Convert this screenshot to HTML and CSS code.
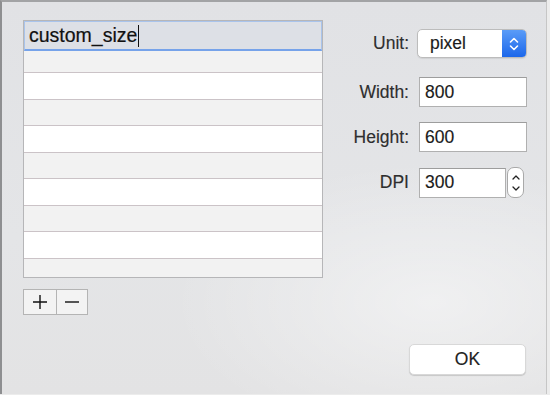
FILE: index.html
```html
<!DOCTYPE html>
<html lang="en">
<head>
    <meta charset="UTF-8">
    <title>Custom size</title>
    <link rel="stylesheet" href="styles.css">
</head>
<body>
    <div class="window">
        <div class="left-col">
            <div class="size-list">
                <div class="row edit-row">
                    <span class="edit-text">custom_size</span><span class="caret"></span>
                </div>
                <div class="row odd first"></div>
                <div class="row even"></div>
                <div class="row odd"></div>
                <div class="row even"></div>
                <div class="row odd"></div>
                <div class="row even"></div>
                <div class="row odd"></div>
                <div class="row even"></div>
                <div class="row odd last"></div>
            </div>
            <div class="list-buttons">
                <button class="list-btn" title="Add">
                    <svg width="16" height="16" viewBox="0 0 16 16"><path d="M8 1v14M1 8h14" stroke="#111" stroke-width="1.4" fill="none"/></svg>
                </button>
                <button class="list-btn minus" title="Remove">
                    <svg width="16" height="16" viewBox="0 0 16 16"><path d="M1 8h14" stroke="#111" stroke-width="1.4" fill="none"/></svg>
                </button>
            </div>
        </div>

        <div class="right-col">
            <div class="field-row unit-row">
                <label class="field-label">Unit:</label>
                <div class="popup">
                    <span class="popup-value">pixel</span>
                    <span class="popup-arrows">
                        <svg width="10" height="16" viewBox="0 0 10 16"><path d="M1.5 6L5 2.5L8.5 6M1.5 10L5 13.5L8.5 10" stroke="#fff" stroke-width="1.6" fill="none" stroke-linecap="round" stroke-linejoin="round"/></svg>
                    </span>
                </div>
            </div>
            <div class="field-row">
                <label class="field-label" for="width">Width:</label>
                <input class="text-input" id="width" type="text" value="800">
            </div>
            <div class="field-row">
                <label class="field-label" for="height">Height:</label>
                <input class="text-input" id="height" type="text" value="600">
            </div>
            <div class="field-row">
                <label class="field-label" for="dpi">DPI</label>
                <input class="text-input dpi-input" id="dpi" type="text" value="300">
                <span class="stepper">
                    <svg width="10" height="26" viewBox="0 0 10 26"><path d="M2 9L5 6L8 9M2 17L5 20L8 17" stroke="#222" stroke-width="1.3" fill="none" stroke-linecap="round" stroke-linejoin="round"/></svg>
                </span>
            </div>

            <button class="ok-btn">OK</button>
        </div>
    </div>
</body>
</html>
```

FILE: styles.css
```css
body {
    margin: 0;
    width: 550px;
    height: 395px;
    overflow: hidden;
    background-color: #ececec;
    font-family: 'Liberation Sans', Arial, sans-serif;
    color: #222;
}

.window {
    box-sizing: border-box;
    width: 547px;
    height: 394px;
    display: flex;
    padding: 18px 0 19px 21px;
    border-top: 2px solid #a2a3a5;
    border-left: 2px solid #8e8f91;
    border-right: 1px solid #c6c6c6;
    background:
        radial-gradient(ellipse 260px 140px at 430px 300px, rgba(255, 255, 255, 0.45), rgba(255, 255, 255, 0)),
        linear-gradient(to bottom, #e1e2e5, #e4e5e7 60%, #e3e3e4);
}

/* список размеров */
.left-col {
    width: 300px;
    display: flex;
    flex-direction: column;
}

.size-list {
    box-sizing: border-box;
    height: 258px;
    border: 1px solid #b6b6b8;
    overflow: hidden;
    background-color: #f2f2f2;
}

.row {
    box-sizing: border-box;
    height: 26.5px;
    border-bottom: 1px solid #cbc3c7;
}

.row.odd {
    background-color: #f2f2f2;
}

.row.even {
    background-color: #ffffff;
}

.row.first {
    height: 22px;
}

.row.last {
    border-bottom: none;
}

.edit-row {
    height: 30px;
    display: flex;
    align-items: center;
    padding-left: 4px;
    background-color: #dde0e6;
    border: 1px solid #a9c4ec;
    border-bottom: 2.5px solid #76a3ea;
}

.edit-text {
    font-size: 19.5px;
    color: #111;
    line-height: 1;
    -webkit-text-stroke: 0.2px #111;
}

.caret {
    display: inline-block;
    width: 1px;
    height: 22px;
    background-color: #111;
    margin-left: 1px;
}

.list-buttons {
    display: flex;
    margin-top: 11px;
}

.list-btn {
    box-sizing: border-box;
    width: 34px;
    height: 26px;
    padding: 0;
    display: flex;
    justify-content: center;
    align-items: center;
    background-color: #f3f3f3;
    border: 1px solid #b4b4b4;
}

.list-btn.minus {
    width: 31px;
    border-left: none;
}

/* поля справа */
.right-col {
    width: 187px;
    margin-left: 17px;
    padding-top: 9px;
    display: flex;
    flex-direction: column;
    gap: 15px;
}

.field-row {
    display: flex;
    align-items: center;
}

.unit-row {
    margin-bottom: 4px;
}

.field-label {
    width: 69px;
    margin-right: 10px;
    text-align: right;
    font-size: 17.5px;
    color: #2e2e2e;
    -webkit-text-stroke: 0.15px #2e2e2e;
}

.popup {
    box-sizing: border-box;
    width: 110px;
    height: 29px;
    margin-left: -2px;
    display: flex;
    border: 1px solid #bcbcbc;
    border-radius: 5px;
    background-color: #fff;
    overflow: hidden;
    box-shadow: 0 1px 1px rgba(0, 0, 0, 0.08);
}

.popup-value {
    flex: 1;
    padding-left: 12px;
    font-size: 17.5px;
    line-height: 27px;
    color: #1a1a1a;
    -webkit-text-stroke: 0.15px #1a1a1a;
}

.popup-arrows {
    width: 24px;
    display: flex;
    justify-content: center;
    align-items: center;
    background: linear-gradient(to bottom, #5a9cf8, #1c67ea);
}

.text-input {
    box-sizing: border-box;
    width: 108px;
    height: 30px;
    padding: 0 0 0 5px;
    border: 1px solid #b0b0b0;
    border-top-color: #9d9d9d;
    background-color: #fff;
    font-family: 'Liberation Sans', Arial, sans-serif;
    font-size: 17.5px;
    color: #1a1a1a;
    -webkit-text-stroke: 0.15px #1a1a1a;
    outline: none;
}

.dpi-input {
    width: 87px;
    height: 30px;
}

.stepper {
    box-sizing: border-box;
    width: 17px;
    height: 31px;
    margin-left: 1px;
    display: flex;
    justify-content: center;
    align-items: center;
    border: 1px solid #a9a9a9;
    border-radius: 7px;
    background-color: #fff;
}

.ok-btn {
    width: 117px;
    height: 31px;
    margin-top: auto;
    margin-left: 69px;
    padding: 0;
    border: 1px solid #d8d8d8;
    border-radius: 5px;
    background-color: #fff;
    box-shadow: 0 1px 1px rgba(0, 0, 0, 0.15);
    font-family: 'Liberation Sans', Arial, sans-serif;
    font-size: 17.5px;
    color: #222;
    -webkit-text-stroke: 0.15px #222;
}
```
